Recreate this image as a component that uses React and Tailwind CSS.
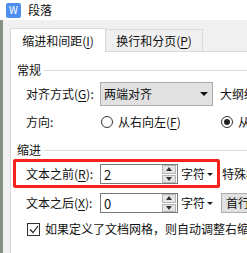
import React from 'react'

const font = { fontFamily: '"Microsoft YaHei", "Noto Sans CJK SC", "Noto Sans", sans-serif' }

function Key({ children }) {
  return <span className="underline underline-offset-2">{children}</span>
}

function SectionTitle({ children }) {
  return (
    <div className="flex items-center h-[16px] ml-[6px]">
      <span className="shrink-0">{children}</span>
      <div className="flex-1 h-px bg-[#dcdcdc] ml-[3px]" />
    </div>
  )
}

function Radio({ checked }) {
  return (
    <span className="w-[12px] h-[12px] rounded-full border border-[#333] bg-white flex items-center justify-center shrink-0">
      {checked && <span className="w-[6px] h-[6px] rounded-full bg-[#222]" />}
    </span>
  )
}

function Spinner({ value }) {
  return (
    <div className="w-[78px] h-[20px] border border-[#7a7a7a] bg-white flex items-center shrink-0">
      <span className="flex-1 pl-[3px] text-[13px] leading-none">{value}</span>
      <div className="w-[14px] h-[18px] flex flex-col gap-px mr-px">
        <div className="flex-1 bg-[#e5e5e5] border border-[#b5b5b5] flex items-center justify-center">
          <svg width="6" height="4" viewBox="0 0 6 4"><path d="M0 4 L3 0 L6 4Z" fill="#333" /></svg>
        </div>
        <div className="flex-1 bg-[#e5e5e5] border border-[#b5b5b5] flex items-center justify-center">
          <svg width="6" height="4" viewBox="0 0 6 4"><path d="M0 0 L6 0 L3 4Z" fill="#333" /></svg>
        </div>
      </div>
    </div>
  )
}

function Unit() {
  return (
    <div className="w-[36px] ml-[3px] flex items-center shrink-0">
      <span>字符</span>
      <svg className="ml-[2px]" width="6" height="3" viewBox="0 0 6 3"><path d="M0 0 L6 0 L3 3Z" fill="#222" /></svg>
    </div>
  )
}

export default function App() {
  return (
    <div className="w-[247px] h-[253px] overflow-hidden bg-[#f0f0f0] flex flex-col text-[12px] text-[#111]" style={font}>
      {/* Title bar */}
      <div className="h-[20px] bg-white flex items-center shrink-0">
        <div className="ml-[6px] w-[15px] h-[15px] rounded-[2px] bg-[#4d8ff0] flex items-center justify-center text-white text-[10px] leading-none">
          W
        </div>
        <span className="ml-[7px] text-[12px]">段落</span>
      </div>

      <div className="flex-1 flex">
        <div className="w-[3px] bg-[#86927f] shrink-0" />
        <div className="flex-1 flex flex-col pl-[7px] pt-[8px]">
          {/* Tabs */}
          <div className="flex items-end h-[24px] shrink-0">
            <div className="w-[96px] h-[24px] bg-white border border-b-0 border-[#d9d9d9] flex items-center justify-center">
              缩进和间距(<Key>I</Key>)
            </div>
            <div className="w-[97px] h-[23px] bg-[#f0f0f0] border border-l-0 border-[#d9d9d9] flex items-center justify-center">
              换行和分页(<Key>P</Key>)
            </div>
            <div className="flex-1 border-b border-[#d9d9d9]" />
          </div>

          {/* Panel */}
          <div className="flex-1 bg-white border-l border-[#d9d9d9] flex flex-col">
            <div className="mt-[10px]">
              <SectionTitle>常规</SectionTitle>
            </div>

            <div className="mt-[4px] h-[24px] flex items-center pl-[15px]">
              <span className="w-[74px] shrink-0">对齐方式(<Key>G</Key>):</span>
              <div className="w-[113px] h-[24px] bg-[#e1e1e1] border border-[#adadad] flex items-center pl-[3px] pr-[4px] shrink-0">
                <span className="flex-1">两端对齐</span>
                <svg width="8" height="4" viewBox="0 0 8 4"><path d="M0 0 L8 0 L4 4Z" fill="#111" /></svg>
              </div>
              <span className="ml-[7px] whitespace-nowrap">大纲级别</span>
            </div>

            <div className="mt-[8px] h-[16px] flex items-center pl-[15px]">
              <span className="w-[75px] shrink-0">方向:</span>
              <Radio />
              <span className="ml-[5px] w-[103px] shrink-0">从右向左(<Key>F</Key>)</span>
              <Radio checked />
              <span className="ml-[5px] whitespace-nowrap">从左向右</span>
            </div>

            <div className="mt-[12px]">
              <SectionTitle>缩进</SectionTitle>
            </div>

            <div className="mt-[1px] flex items-center">
              <div className="ml-[2px] h-[29px] border-[3px] border-[#f5231c] rounded-[2px] flex items-center pl-[10px] pt-[1px] shrink-0">
                <span className="w-[74px] shrink-0">文本之前(<Key>R</Key>):</span>
                <Spinner value="2" />
                <Unit />
              </div>
              <span className="ml-[2px] whitespace-nowrap">特殊格式(S):</span>
            </div>

            <div className="mt-[5px] h-[20px] flex items-center pl-[15px]">
              <span className="w-[74px] shrink-0">文本之后(<Key>X</Key>):</span>
              <Spinner value="0" />
              <Unit />
              <div className="ml-[4px] h-[20px] px-[4px] bg-[#e1e1e1] border border-[#adadad] flex items-center whitespace-nowrap">
                首行缩进
              </div>
            </div>

            <div className="mt-[8px] h-[16px] flex items-center pl-[16px]">
              <span className="w-[13px] h-[13px] border border-[#333] bg-white flex items-center justify-center shrink-0">
                <svg width="10" height="9" viewBox="0 0 10 9"><path d="M1 4.5 L4 7.5 L9 1" fill="none" stroke="#222" strokeWidth="1.2" /></svg>
              </span>
              <span className="ml-[5px] whitespace-nowrap">如果定义了文档网格，则自动调整右缩进</span>
            </div>
          </div>
        </div>
      </div>
    </div>
  )
}
